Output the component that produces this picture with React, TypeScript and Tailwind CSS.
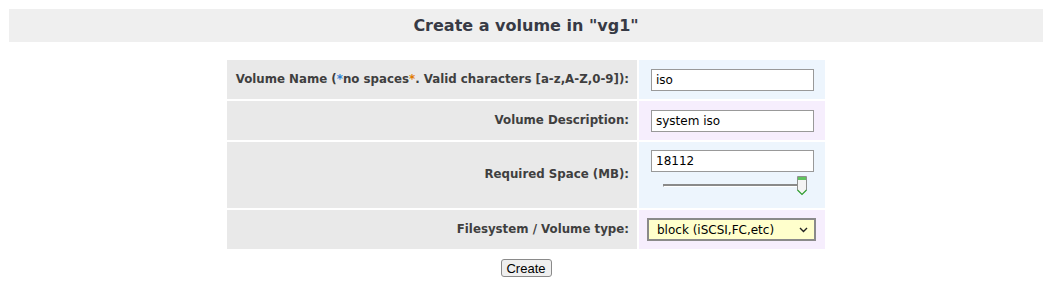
const Label = ({ children, tall }: { children: React.ReactNode; tall?: boolean }) => (
  <div
    className={`flex items-center justify-end bg-[#e9e9e9] pr-2 text-[11.8px] font-bold text-[#3f3f3f] ${
      tall ? "h-[66px]" : "h-[39px]"
    }`}
  >
    {children}
  </div>
);

const Field = ({ value }: { value: string }) => (
  <input
    type="text"
    defaultValue={value}
    className="h-[22px] w-[163px] border border-[#999] bg-white px-[4px] text-[12px] text-black outline-none"
  />
);

const SliderThumb = () => (
  <svg width="12" height="21" viewBox="0 0 12 21">
    <path d="M1.5 1.5 H10.5 V15 L6 19.5 L1.5 15 Z" fill="#f4f4f4" stroke="#8f8f8f" />
    <rect x="2" y="2" width="8" height="3" fill="#5fc35f" />
    <path d="M1.5 15 L6 19.5 L10.5 15" fill="none" stroke="#3aa83a" strokeWidth="1.2" />
  </svg>
);

export default function App() {
  return (
    <div className="min-h-screen bg-white py-[9px] pl-[9px] pr-[11px] font-['DejaVu_Sans',Verdana,sans-serif]">
      <div className="flex h-[33px] items-center justify-center bg-[#efefef]">
        <h1 className="text-[16px] font-bold text-[#373a45]">Create a volume in "vg1"</h1>
      </div>

      <div className="mx-auto mt-[18px] grid w-[598px] grid-cols-[410px_186px] gap-[2px]">
        <Label>
          Volume Name (<span className="text-[#2a7fd4]">*</span>no spaces
          <span className="text-[#e07b00]">*</span>. Valid characters [a-z,A-Z,0-9]):
        </Label>
        <div className="flex items-center bg-[#edf5fd] pl-3">
          <Field value="iso" />
        </div>

        <Label>Volume Description:</Label>
        <div className="flex items-center bg-[#f6eefd] pl-3">
          <Field value="system iso" />
        </div>

        <Label tall>Required Space (MB):</Label>
        <div className="flex flex-col bg-[#edf5fd] pl-3 pt-2">
          <Field value="18112" />
          <div className="relative mt-[3px] h-[21px] w-[160px]">
            <div className="absolute left-[12px] top-[9px] h-[3px] w-[138px] border-t-2 border-l border-[#8a8a8a] border-b border-b-white bg-[#f0f0f0]" />
            <div className="absolute left-[145px] top-0">
              <SliderThumb />
            </div>
          </div>
        </div>

        <Label>Filesystem / Volume type:</Label>
        <div className="flex items-center bg-[#f6eefd] pl-2">
          <div className="flex h-[23px] w-[169px] items-center justify-between border-2 border-[#8a8a8a] bg-[#ffffcc] pl-[8px] pr-[6px] text-[12px] text-black">
            <span>block (iSCSI,FC,etc)</span>
            <svg width="9" height="6" viewBox="0 0 9 6">
              <path d="M1 1 L4.5 4.5 L8 1" fill="none" stroke="#222" strokeWidth="1.4" />
            </svg>
          </div>
        </div>
      </div>

      <div className="mt-[10px] flex justify-center">
        <button className="h-[18px] w-[51px] rounded-[3px] border border-[#8a8a8a] bg-[#efefef] font-['Liberation_Sans',Arial,sans-serif] text-[13px] leading-none text-black">
          Create
        </button>
      </div>
    </div>
  );
}
